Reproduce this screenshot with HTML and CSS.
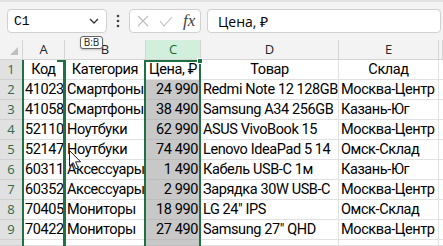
FILE: index.html
```html
<!DOCTYPE html>
<html lang="ru">
<head>
    <meta charset="UTF-8">
    <title>Склад</title>
    <link rel="stylesheet" href="styles.css">
</head>
<body>
    <div class="formula-bar">
        <div class="name-box">
            <span>C1</span>
            <svg width="10" height="6" viewBox="0 0 10 6"><polyline points="1,1 5,5 9,1" fill="none" stroke="#333" stroke-width="1.3"/></svg>
        </div>
        <div class="dots">
            <svg width="4" height="14" viewBox="0 0 4 14"><circle cx="2" cy="2" r="1.3" fill="#444"/><circle cx="2" cy="7" r="1.3" fill="#444"/><circle cx="2" cy="12" r="1.3" fill="#444"/></svg>
        </div>
        <div class="fx-box">
            <svg width="12" height="12" viewBox="0 0 12 12"><path d="M1 1 L11 11 M11 1 L1 11" stroke="#bdbdbd" stroke-width="1.1"/></svg>
            <svg width="14" height="11" viewBox="0 0 14 11"><polyline points="1,5 5,10 13,1" fill="none" stroke="#bdbdbd" stroke-width="1.1"/></svg>
            <span class="fx">fx</span>
        </div>
        <div class="formula-input">Цена, ₽</div>
    </div>

    <div class="sheet">
        <div class="row head">
            <div class="corner"><span class="tri"></span></div>
            <div class="col-hd">A</div>
            <div class="col-hd">B</div>
            <div class="col-hd selected">C</div>
            <div class="col-hd">D</div>
            <div class="col-hd">E</div>
            <div class="col-hd"></div>
        </div>
        <div class="row">
            <div class="row-hd">1</div>
            <div class="cell center">Код</div>
            <div class="cell center">Категория</div>
            <div class="cell center active">Цена, ₽</div>
            <div class="cell center">Товар</div>
            <div class="cell center">Склад</div>
            <div class="cell"></div>
        </div>
        <div class="row">
            <div class="row-hd">2</div>
            <div class="cell num">41023</div>
            <div class="cell">Смартфоны</div>
            <div class="cell num sel">24&nbsp;990</div>
            <div class="cell">Redmi Note 12 128GB</div>
            <div class="cell">Москва-Центр</div>
            <div class="cell"></div>
        </div>
        <div class="row">
            <div class="row-hd">3</div>
            <div class="cell num">41058</div>
            <div class="cell">Смартфоны</div>
            <div class="cell num sel">38&nbsp;490</div>
            <div class="cell">Samsung A34 256GB</div>
            <div class="cell">Казань-Юг</div>
            <div class="cell"></div>
        </div>
        <div class="row">
            <div class="row-hd">4</div>
            <div class="cell num">52110</div>
            <div class="cell">Ноутбуки</div>
            <div class="cell num sel">62&nbsp;990</div>
            <div class="cell">ASUS VivoBook 15</div>
            <div class="cell">Москва-Центр</div>
            <div class="cell"></div>
        </div>
        <div class="row">
            <div class="row-hd">5</div>
            <div class="cell num">52147</div>
            <div class="cell">Ноутбуки</div>
            <div class="cell num sel">74&nbsp;490</div>
            <div class="cell">Lenovo IdeaPad 5 14</div>
            <div class="cell">Омск-Склад</div>
            <div class="cell"></div>
        </div>
        <div class="row">
            <div class="row-hd">6</div>
            <div class="cell num">60311</div>
            <div class="cell">Аксессуары</div>
            <div class="cell num sel">1&nbsp;490</div>
            <div class="cell">Кабель USB-C 1м</div>
            <div class="cell">Казань-Юг</div>
            <div class="cell"></div>
        </div>
        <div class="row">
            <div class="row-hd">7</div>
            <div class="cell num">60352</div>
            <div class="cell">Аксессуары</div>
            <div class="cell num sel">2&nbsp;990</div>
            <div class="cell">Зарядка 30W USB-C</div>
            <div class="cell">Москва-Центр</div>
            <div class="cell"></div>
        </div>
        <div class="row">
            <div class="row-hd">8</div>
            <div class="cell num">70405</div>
            <div class="cell">Мониторы</div>
            <div class="cell num sel">18&nbsp;990</div>
            <div class="cell">LG 24" IPS</div>
            <div class="cell">Омск-Склад</div>
            <div class="cell"></div>
        </div>
        <div class="row">
            <div class="row-hd">9</div>
            <div class="cell num">70422</div>
            <div class="cell">Мониторы</div>
            <div class="cell num sel">27&nbsp;490</div>
            <div class="cell">Samsung 27" QHD</div>
            <div class="cell">Москва-Центр</div>
            <div class="cell"></div>
        </div>
        <div class="row last">
            <div class="row-hd"></div>
            <div class="cell"></div>
            <div class="cell"></div>
            <div class="cell sel"></div>
            <div class="cell"></div>
            <div class="cell"></div>
            <div class="cell"></div>
        </div>
    </div>

    <!-- drag overlay -->
    <div class="drag-line"></div>
    <div class="insert-mark"></div>
    <div class="sel-box"></div>
    <div class="sel-handle"></div>
    <div class="drag-tip">B:B</div>
    <svg class="cursor" width="13" height="20" viewBox="0 0 13 20"><path d="M0.5 0.5 L0.5 16 L4.2 12.6 L6.8 18.8 L9.2 17.8 L6.6 11.8 L11.6 11.8 Z" fill="#fff" stroke="#222" stroke-width="1"/></svg>
</body>
</html>
```

FILE: styles.css
```css
* {
    box-sizing: border-box;
}

body {
    position: relative;
    width: 443px;
    height: 246px;
    margin: 0;
    overflow: hidden;
    background: #f3f3f3;
    font-family: "Roboto", sans-serif;
    color: #000;
}

.formula-bar {
    display: flex;
    align-items: center;
    height: 40px;
    padding: 7px 0 7px 7px;
    border-top: 2px solid #e2e2e2;
}

.name-box {
    display: flex;
    align-items: center;
    justify-content: space-between;
    width: 100px;
    height: 24px;
    padding: 0 7px 0 6px;
    background: #fff;
    border: 1px solid #d1d1d1;
    border-radius: 4px;
    font-family: "Liberation Mono", monospace;
    font-size: 13px;
}

.dots {
    display: flex;
    justify-content: center;
    width: 22px;
}

.fx-box {
    display: flex;
    align-items: center;
    gap: 10px;
    width: 72px;
    height: 24px;
    padding: 0 4px 0 7px;
    background: #fff;
    border: 1px solid #d1d1d1;
    border-radius: 4px;
}

.fx {
    font-family: "Liberation Serif", serif;
    font-style: italic;
    font-size: 17px;
    color: #444;
}

.formula-input {
    width: 234px;
    height: 24px;
    margin-left: 6px;
    padding: 2px 10px;
    background: #fff;
    border: 1px solid #d1d1d1;
    border-radius: 4px;
    font-family: "Open Sans", sans-serif;
    font-size: 14px;
}

.sheet {
    height: 206px;
    overflow: hidden;
    background: #fff;
}

.row {
    display: grid;
    grid-template-columns: 23px 42px 81px 55px 138px 100px 1fr;
    height: 20px;
}

.row.last {
    height: 6px;
}

.row > div {
    border-right: 1px solid #e1e1e1;
    border-bottom: 1px solid #e1e1e1;
    line-height: 19px;
    white-space: nowrap;
    overflow: hidden;
}

.head > div {
    background: #f3f3f3;
    border-color: #d4d4d4;
}

.corner {
    position: relative;
}

.tri {
    position: absolute;
    right: 4px;
    bottom: 4px;
    border-left: 8px solid transparent;
    border-bottom: 8px solid #bfbfbf;
}

.col-hd {
    text-align: center;
    font-family: "Open Sans", sans-serif;
    font-size: 13px;
    color: #262626;
}

.head .selected {
    background: #d2efdc;
    color: #0f6a37;
}

.row .row-hd {
    background: #e1e1e1;
    border-color: #d0d0d0;
    text-align: center;
    font-family: "Open Sans", sans-serif;
    font-size: 13px;
    color: #2f6a4e;
}

.cell {
    padding: 0 2px;
    font-size: 14.5px;
    letter-spacing: -0.4px;
}

.center {
    text-align: center;
}

.num {
    text-align: right;
}

.row .sel {
    background: #c8c8c8;
    border-color: #bdbdbd;
}

.drag-line,
.insert-mark {
    position: absolute;
    top: 60px;
    bottom: 0;
    width: 3px;
    background: #1e7145;
}

.drag-line {
    left: 22px;
    width: 2px;
}

.insert-mark {
    left: 63px;
}

.insert-mark::before {
    content: "";
    position: absolute;
    top: 0;
    right: 0;
    width: 9px;
    height: 2px;
    background: #1e7145;
}

.sel-box {
    position: absolute;
    left: 144px;
    top: 60px;
    bottom: 0;
    width: 57px;
    border: 2px solid #1e7145;
    border-bottom: none;
}

.sel-handle {
    position: absolute;
    left: 197px;
    top: 58px;
    width: 6px;
    height: 6px;
    background: #1e7145;
    border: 1px solid #fff;
}

.drag-tip {
    position: absolute;
    left: 80px;
    top: 36px;
    width: 23px;
    height: 13px;
    background: #fff;
    border: 1px solid #666;
    border-radius: 3px;
    box-shadow: 0 1px 2px rgba(0, 0, 0, 0.2);
    font-family: "Open Sans", sans-serif;
    font-size: 10px;
    line-height: 11px;
    text-align: center;
    color: #222;
}

.cursor {
    position: absolute;
    left: 69px;
    top: 150px;
}
```
